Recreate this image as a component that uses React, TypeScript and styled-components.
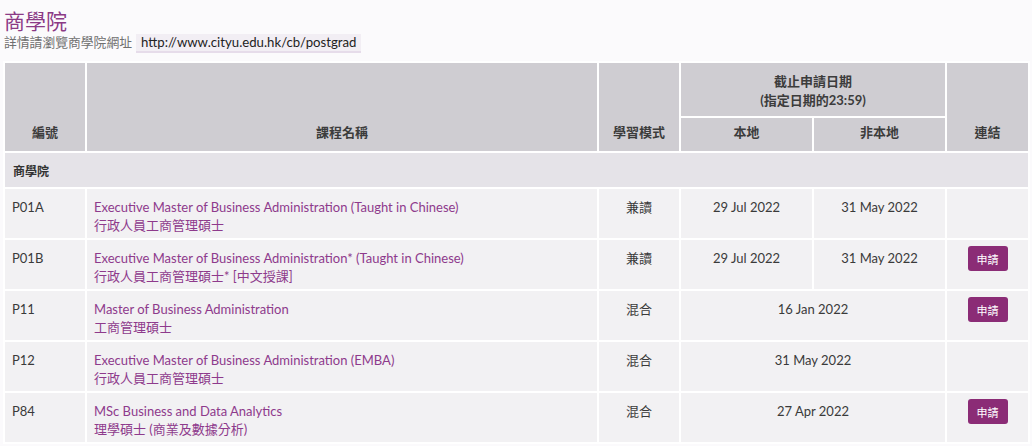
import React from 'react';
import styled, { createGlobalStyle } from 'styled-components';

interface Programme {
  code: string;
  en: string;
  zh: string;
  mode: string;
  local?: string;
  nonLocal?: string;
  single?: string;
  apply: boolean;
}

const programmes: Programme[] = [
  {
    code: 'P01A',
    en: 'Executive Master of Business Administration (Taught in Chinese)',
    zh: '行政人員工商管理碩士',
    mode: '兼讀',
    local: '29 Jul 2022',
    nonLocal: '31 May 2022',
    apply: false,
  },
  {
    code: 'P01B',
    en: 'Executive Master of Business Administration* (Taught in Chinese)',
    zh: '行政人員工商管理碩士* [中文授課]',
    mode: '兼讀',
    local: '29 Jul 2022',
    nonLocal: '31 May 2022',
    apply: true,
  },
  {
    code: 'P11',
    en: 'Master of Business Administration',
    zh: '工商管理碩士',
    mode: '混合',
    single: '16 Jan 2022',
    apply: true,
  },
  {
    code: 'P12',
    en: 'Executive Master of Business Administration (EMBA)',
    zh: '行政人員工商管理碩士',
    mode: '混合',
    single: '31 May 2022',
    apply: false,
  },
  {
    code: 'P84',
    en: 'MSc Business and Data Analytics',
    zh: '理學碩士 (商業及數據分析)',
    mode: '混合',
    single: '27 Apr 2022',
    apply: true,
  },
];

const GlobalStyle = createGlobalStyle`
  body {
    margin: 0;
    background: #fbfafc;
    font-family: Lato, "Noto Sans CJK TC", sans-serif;
    color: #3a3a3a;
  }
`;

const Page = styled.div`
  padding: 7px 4px 0 4px;
`;

const Title = styled.h1`
  margin: 0;
  font-size: 21px;
  line-height: 27px;
  font-weight: 400;
  color: #8b3a86;
`;

const Intro = styled.div`
  display: flex;
  align-items: center;
  gap: 4px;
  font-size: 12.8px;
  line-height: 17px;
  color: #6f6f6f;
  margin-bottom: 10px;
`;

const UrlBox = styled.span`
  padding: 0 5px;
  background: #f2eef4;
  box-shadow: 0 2px 0 #e6dcea;
  color: #222;
  font-size: 13.2px;
`;

const Table = styled.table`
  width: 1025px;
  margin-left: -1px;
  border-collapse: collapse;
  table-layout: fixed;
  font-size: 13px;
`;

const Th = styled.th<{ $align?: 'top' | 'bottom' }>`
  background: #cfcdd2;
  border: 2px solid #fff;
  font-weight: 700;
  font-size: 13px;
  color: #3c3c3c;
  text-align: center;
  vertical-align: ${(p) => (p.$align === 'top' ? 'top' : 'bottom')};
  padding: ${(p) => (p.$align === 'top' ? '9px 6px 0' : '0 6px 9px')};
  line-height: 19px;
`;

const GroupCell = styled.td`
  background: #e5e3e8;
  border: 2px solid #fff;
  height: 34px;
  padding: 0 8px;
  font-weight: 700;
  font-size: 12px;
  color: #333;
`;

const Td = styled.td<{ $center?: boolean }>`
  background: #f2f1f3;
  border: 2px solid #fff;
  height: 49.5px;
  box-sizing: border-box;
  padding: 9px 7px 4px;
  vertical-align: top;
  line-height: 18px;
  text-align: ${(p) => (p.$center ? 'center' : 'left')};
  color: #3a3a3a;
`;

const CourseLink = styled.a`
  display: block;
  color: #8e3a8c;
  text-decoration: none;
  font-size: 13px;
`;

const ApplyButton = styled.button`
  display: block;
  margin: -3px auto 0;
  width: 40px;
  height: 25px;
  border: none;
  border-radius: 3px;
  background: #8b2c76;
  color: #fff;
  font-family: inherit;
  font-size: 11px;
  padding: 0;
  cursor: pointer;
`;

export default function App() {
  return (
    <Page>
      <GlobalStyle />
      <Title>商學院</Title>
      <Intro>
        詳情請瀏覽商學院網址
        <UrlBox>http://www.cityu.edu.hk/cb/postgrad</UrlBox>
      </Intro>
      <Table>
        <colgroup>
          <col style={{ width: 82 }} />
          <col style={{ width: 512 }} />
          <col style={{ width: 82 }} />
          <col style={{ width: 133 }} />
          <col style={{ width: 133 }} />
          <col style={{ width: 83 }} />
        </colgroup>
        <thead>
          <tr style={{ height: 55 }}>
            <Th rowSpan={2}>編號</Th>
            <Th rowSpan={2}>課程名稱</Th>
            <Th rowSpan={2}>學習模式</Th>
            <Th colSpan={2} $align="top">
              截止申請日期
              <br />
              (指定日期的23:59)
            </Th>
            <Th rowSpan={2}>連結</Th>
          </tr>
          <tr style={{ height: 35 }}>
            <Th>本地</Th>
            <Th>非本地</Th>
          </tr>
        </thead>
        <tbody>
          <tr>
            <GroupCell colSpan={6}>商學院</GroupCell>
          </tr>
          {programmes.map((p) => (
            <tr key={p.code}>
              <Td>{p.code}</Td>
              <Td>
                <CourseLink href="#">
                  {p.en}
                  <br />
                  {p.zh}
                </CourseLink>
              </Td>
              <Td $center>{p.mode}</Td>
              {p.single ? (
                <Td $center colSpan={2}>
                  {p.single}
                </Td>
              ) : (
                <>
                  <Td $center>{p.local}</Td>
                  <Td $center>{p.nonLocal}</Td>
                </>
              )}
              <Td $center>{p.apply && <ApplyButton>申請</ApplyButton>}</Td>
            </tr>
          ))}
        </tbody>
      </Table>
    </Page>
  );
}
